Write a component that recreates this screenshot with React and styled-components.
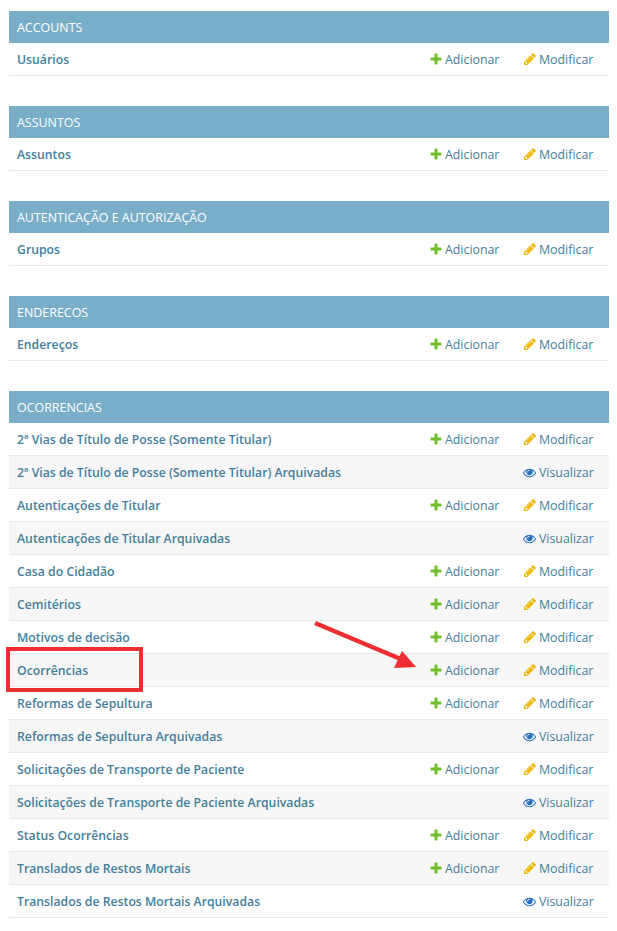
import styled, { createGlobalStyle } from "styled-components";

const GlobalStyle = createGlobalStyle`
  html, body {
    margin: 0;
    padding: 0;
    background: #fff;
  }
  body {
    font-family: "Open Sans", "Noto Sans", sans-serif;
    font-size: 12.35px;
    color: #333;
  }
`;

const Page = styled.div`
  display: flex;
  flex-direction: column;
  gap: 30px;
  width: 600px;
  padding: 11px 8px 13px 9px;
`;

const Module = styled.section`
  display: flex;
  flex-direction: column;
`;

const ModuleHeader = styled.h2`
  margin: 0;
  height: 32px;
  padding: 0 8px;
  display: flex;
  align-items: center;
  background: #79aec8;
  color: #fff;
  font-size: 12.45px;
  font-weight: 400;
  text-transform: uppercase;
`;

const Row = styled.div`
  position: ${(props) => (props.$marked ? "relative" : "static")};
  z-index: ${(props) => (props.$marked ? 1 : "auto")};
  display: flex;
  align-items: center;
  height: 32px;
  border-bottom: 1px solid #e8e8e8;
  background: ${(props) => (props.$alt ? "#f7f7f7" : "#fff")};
`;

const Name = styled.a`
  flex: 1;
  padding-left: 8px;
  color: #447e9b;
  font-weight: 600;
  font-size: 12.25px;
`;

const ActionCell = styled.div`
  width: ${(props) => props.$width}px;
  display: flex;
  align-items: center;
`;

const ActionLink = styled.a`
  display: flex;
  align-items: center;
  gap: 2px;
  color: #447e9b;
`;

const Icon = styled.svg`
  width: 14px;
  height: 14px;
  flex: none;
`;

const EyeIcon = styled(Icon)`
  width: 13px;
  height: 13px;
  margin-right: 1px;
`;

const Highlight = styled.div`
  position: absolute;
  left: -3px;
  top: -7px;
  width: 129px;
  height: 37px;
  border: 4px solid #ee2e30;
`;

const Arrow = styled.svg`
  position: absolute;
  left: 300px;
  top: -36px;
  width: 120px;
  height: 60px;
  pointer-events: none;
`;

const AddIcon = () => (
  <Icon viewBox="0 0 1792 1792">
    <path
      fill="#70bf2b"
      d="M1600 796v192q0 40-28 68t-68 28h-416v416q0 40-28 68t-68 28h-192q-40 0-68-28t-28-68v-416h-416q-40 0-68-28t-28-68v-192q0-40 28-68t68-28h416v-416q0-40 28-68t68-28h192q40 0 68 28t28 68v416h416q40 0 68 28t28 68z"
    />
  </Icon>
);

const ChangeIcon = () => (
  <Icon viewBox="0 0 1792 1792">
    <path
      fill="#efb80b"
      d="M491 1536l91-91-235-235-91 91v107h128v128h107zm523-928q0-22-22-22-10 0-17 7l-542 542q-7 7-7 17 0 22 22 22 10 0 17-7l542-542q7-7 7-17zm-54-192l416 416-832 832h-416v-416zm683 96q0 53-37 90l-166 166-416-416 166-165q36-38 90-38 53 0 91 38l235 234q37 39 37 91z"
    />
  </Icon>
);

const ViewIcon = () => (
  <EyeIcon viewBox="0 0 1792 1792">
    <path
      fill="#2b70bf"
      d="M1664 960q-152-236-381-353 61 104 61 225 0 185-131.500 316.500t-316.500 131.500-316.500-131.500-131.500-316.500q0-121 61-225-229 117-381 353 133 205 333.500 326.500t434.500 121.500 434.500-121.500 333.500-326.500zm-720-384q0-20-14-34t-34-14q-125 0-214.500 89.500t-89.500 214.500q0 20 14 34t34 14 34-14 14-34q0-86 61-147t147-61q20 0 34-14t14-34zm848 384q0 34-20 69-140 230-376.500 368.500t-499.500 138.500-499.500-139-376.500-368q-20-35-20-69t20-69q140-229 376.500-368t499.500-139 499.500 139 376.500 368q20 35 20 69z"
    />
  </EyeIcon>
);

const modules = [
  { title: "Accounts", rows: [{ name: "Usuários" }] },
  { title: "Assuntos", rows: [{ name: "Assuntos" }] },
  { title: "Autenticação e Autorização", rows: [{ name: "Grupos" }] },
  { title: "Enderecos", rows: [{ name: "Endereços" }] },
  {
    title: "Ocorrencias",
    rows: [
      { name: "2ª Vias de Título de Posse (Somente Titular)" },
      { name: "2ª Vias de Título de Posse (Somente Titular) Arquivadas", readOnly: true },
      { name: "Autenticações de Titular" },
      { name: "Autenticações de Titular Arquivadas", readOnly: true },
      { name: "Casa do Cidadão" },
      { name: "Cemitérios" },
      { name: "Motivos de decisão" },
      { name: "Ocorrências", marked: true },
      { name: "Reformas de Sepultura" },
      { name: "Reformas de Sepultura Arquivadas", readOnly: true },
      { name: "Solicitações de Transporte de Paciente" },
      { name: "Solicitações de Transporte de Paciente Arquivadas", readOnly: true },
      { name: "Status Ocorrências" },
      { name: "Translados de Restos Mortais" },
      { name: "Translados de Restos Mortais Arquivadas", readOnly: true },
    ],
  },
];

export default function App() {
  return (
    <Page>
      <GlobalStyle />
      {modules.map((mod) => (
        <Module key={mod.title}>
          <ModuleHeader>{mod.title}</ModuleHeader>
          {mod.rows.map((row, i) => (
            <Row key={row.name} $alt={i % 2 === 1} $marked={row.marked}>
              <Name>{row.name}</Name>
              <ActionCell $width={94}>
                {!row.readOnly && (
                  <ActionLink>
                    <AddIcon />
                    Adicionar
                  </ActionLink>
                )}
              </ActionCell>
              <ActionCell $width={86}>
                {row.readOnly ? (
                  <ActionLink>
                    <ViewIcon />
                    Visualizar
                  </ActionLink>
                ) : (
                  <ActionLink>
                    <ChangeIcon />
                    Modificar
                  </ActionLink>
                )}
              </ActionCell>
              {row.marked && (
                <>
                  <Highlight />
                  <Arrow viewBox="0 0 120 60">
                    <line x1="6" y1="5" x2="94" y2="42" stroke="#ee2e30" strokeWidth="4.5" />
                    <polygon points="93,33 107,49 85,50" fill="#ee2e30" />
                  </Arrow>
                </>
              )}
            </Row>
          ))}
        </Module>
      ))}
    </Page>
  );
}
